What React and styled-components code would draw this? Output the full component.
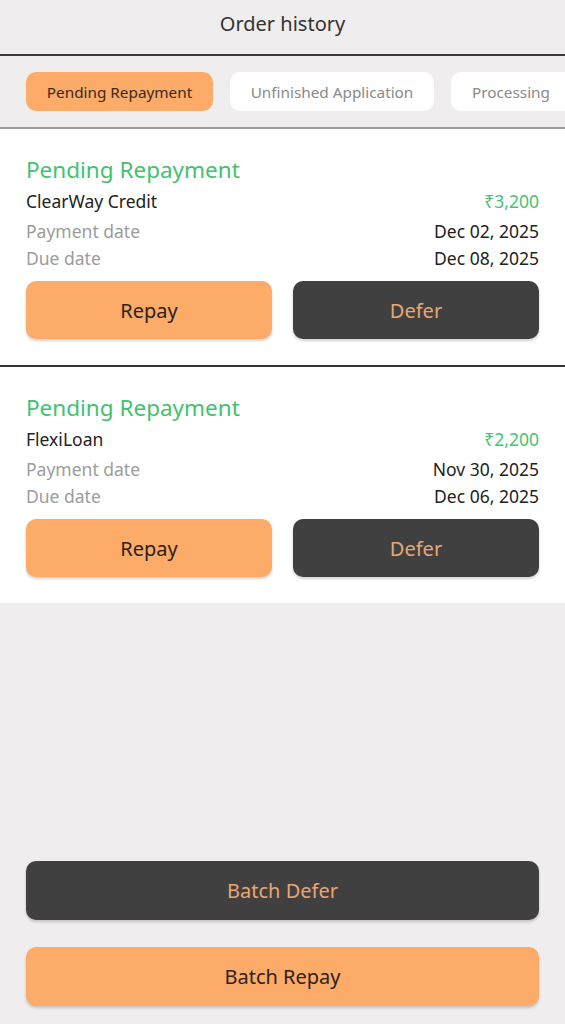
import React from "react";
import styled, { createGlobalStyle } from "styled-components";

const Global = createGlobalStyle`
  html, body { margin: 0; padding: 0; background: #f0edee; }
  body { font-family: "Noto Sans", "Open Sans", sans-serif; }
  * { box-sizing: border-box; }
`;

const Page = styled.div`
  width: 565px;
  min-height: 1024px;
  background: #f0edee;
  display: flex;
  flex-direction: column;
`;

const Header = styled.header`
  height: 56px;
  display: flex;
  align-items: flex-start;
  justify-content: center;
  padding-top: 10px;
  border-bottom: 2px solid #3a3a3a;
  font-size: 20px;
  color: #333;
`;

const TabBar = styled.nav`
  display: flex;
  gap: 17px;
  padding: 16px 0 16px 26px;
  border-bottom: 2px solid #9c9c9c;
  overflow: hidden;
  white-space: nowrap;
`;

const Tab = styled.div`
  flex: 0 0 auto;
  width: ${(p) => p.$w}px;
  height: 39px;
  border-radius: 10px;
  display: flex;
  align-items: center;
  justify-content: ${(p) => (p.$left ? "flex-start" : "center")};
  padding-left: ${(p) => (p.$left ? "21px" : "0")};
  font-size: 15.3px;
  background: ${(p) => (p.$active ? "#fdab68" : "#ffffff")};
  color: ${(p) => (p.$active ? "#3a2a20" : "#8a8a8a")};
`;

const Card = styled.section`
  background: #fff;
  padding: 27px 26px 26px;
  border-bottom: ${(p) => (p.$divider ? "2px solid #333" : "none")};
  display: flex;
  flex-direction: column;
`;

const Title = styled.div`
  color: #43c170;
  font-size: 22.5px;
  line-height: 28px;
  margin-bottom: 2px;
`;

const Row = styled.div`
  display: flex;
  justify-content: space-between;
  align-items: center;
  height: ${(p) => p.$h}px;
  font-size: 17.5px;
`;

const Label = styled.span`
  color: ${(p) => (p.$muted ? "#9c9c9c" : "#222")};
`;

const Value = styled.span`
  color: ${(p) => (p.$green ? "#46c373" : "#222")};
`;

const Actions = styled.div`
  display: grid;
  grid-template-columns: 1fr 1fr;
  gap: 21px;
  margin-top: 11px;
`;

const Btn = styled.button`
  height: 58px;
  border: none;
  border-radius: 10px;
  font-family: inherit;
  font-size: 20px;
  background: ${(p) => (p.$dark ? "#404040" : "#fdab68")};
  color: ${(p) => (p.$dark ? "#e9a672" : "#2e2118")};
  box-shadow: 0 2px 3px rgba(0, 0, 0, 0.18);
`;

const Spacer = styled.div`
  flex: 1;
`;

const Footer = styled.div`
  display: flex;
  flex-direction: column;
  gap: 27px;
  padding: 0 26px 18px;
`;

const BigBtn = styled(Btn)`
  width: 100%;
  height: 59px;
`;

const orders = [
  { name: "ClearWay Credit", amount: "₹3,200", pay: "Dec 02, 2025", due: "Dec 08, 2025" },
  { name: "FlexiLoan", amount: "₹2,200", pay: "Nov 30, 2025", due: "Dec 06, 2025" },
];

export default function App() {
  return (
    <Page>
      <Global />
      <Header>Order history</Header>
      <TabBar>
        <Tab $active $w={187}>Pending Repayment</Tab>
        <Tab $w={204}>Unfinished Application</Tab>
        <Tab $w={140} $left>Processing</Tab>
      </TabBar>
      {orders.map((o, i) => (
        <Card key={o.name} $divider={i === 0}>
          <Title>Pending Repayment</Title>
          <Row $h={30}>
            <Label>{o.name}</Label>
            <Value $green>{o.amount}</Value>
          </Row>
          <Row $h={30}>
            <Label $muted>Payment date</Label>
            <Value>{o.pay}</Value>
          </Row>
          <Row $h={24}>
            <Label $muted>Due date</Label>
            <Value>{o.due}</Value>
          </Row>
          <Actions>
            <Btn>Repay</Btn>
            <Btn $dark>Defer</Btn>
          </Actions>
        </Card>
      ))}
      <Spacer />
      <Footer>
        <BigBtn $dark>Batch Defer</BigBtn>
        <BigBtn>Batch Repay</BigBtn>
      </Footer>
    </Page>
  );
}
